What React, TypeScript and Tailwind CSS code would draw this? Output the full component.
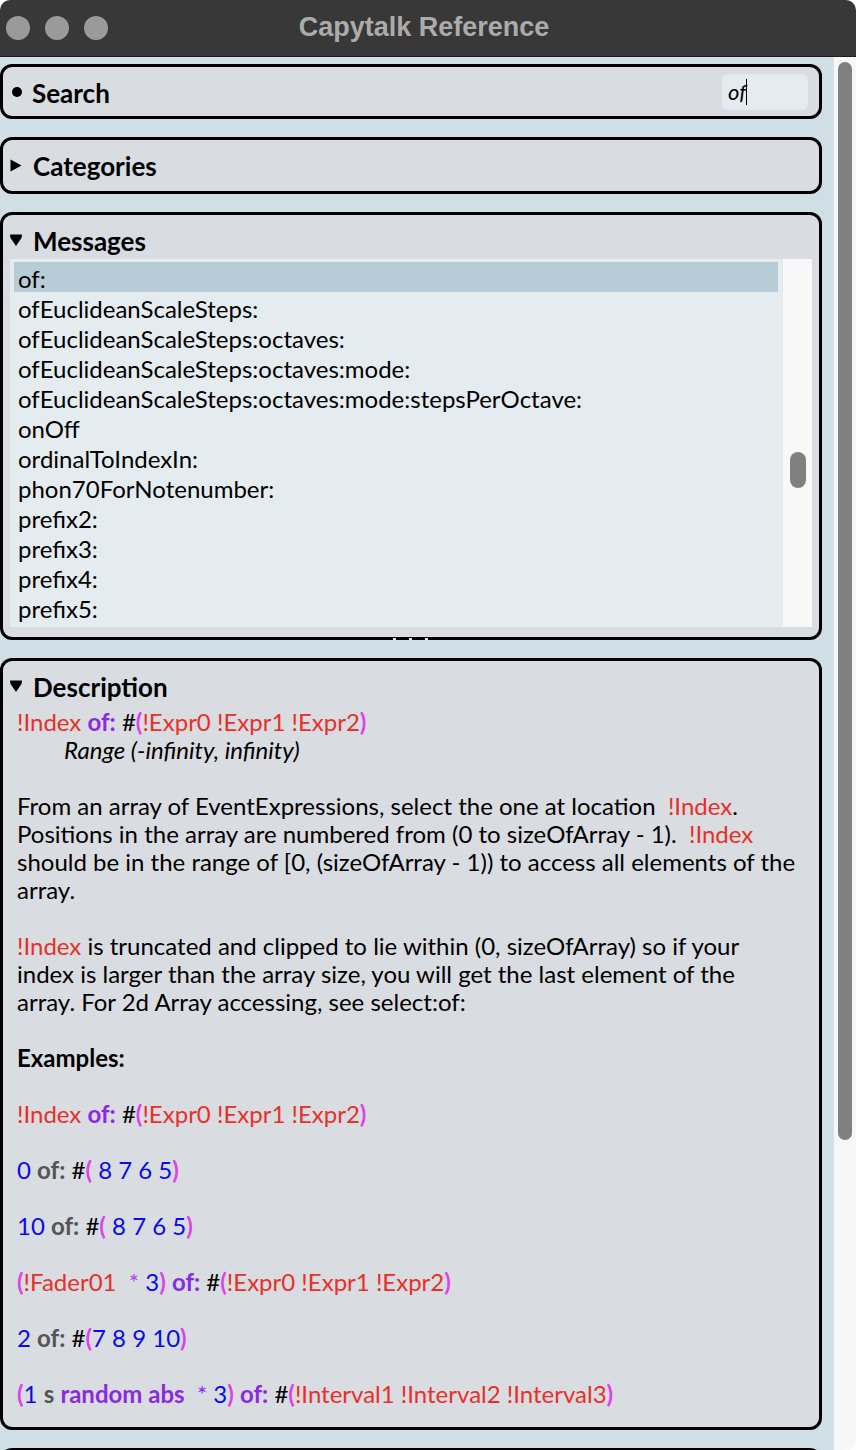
import React from "react";

const R = ({ children }: { children: React.ReactNode }) => <span className="text-[#e8302a]">{children}</span>;
const P = ({ children }: { children: React.ReactNode }) => <span className="text-[#8a2be2] font-bold">{children}</span>;
const G = ({ children }: { children: React.ReactNode }) => <span className="text-[#555555] font-bold">{children}</span>;
const B = ({ children }: { children: React.ReactNode }) => <span className="text-[#0a0aee]">{children}</span>;
const M = ({ children }: { children: React.ReactNode }) => <span className="text-[#dd44e8] font-bold">{children}</span>;
const K = ({ children }: { children: React.ReactNode }) => <span className="text-black">{children}</span>;

const messages = [
  "of:",
  "ofEuclideanScaleSteps:",
  "ofEuclideanScaleSteps:octaves:",
  "ofEuclideanScaleSteps:octaves:mode:",
  "ofEuclideanScaleSteps:octaves:mode:stepsPerOctave:",
  "onOff",
  "ordinalToIndexIn:",
  "phon70ForNotenumber:",
  "prefix2:",
  "prefix3:",
  "prefix4:",
  "prefix5:",
];

function TriRight() {
  return (
    <svg width="12" height="13" viewBox="0 0 12 13" className="shrink-0">
      <polygon points="0.5,0.5 11.5,6.5 0.5,12.5" fill="black" />
    </svg>
  );
}
function TriDown() {
  return (
    <svg width="12" height="12" viewBox="0 0 12 12" className="shrink-0">
      <polygon points="0,0.5 12,0.5 11.5,4 6,12 0.5,4" fill="black" />
    </svg>
  );
}

const Line = ({ children, className = "" }: { children?: React.ReactNode; className?: string }) => (
  <div className={"h-[28px] leading-[30px] whitespace-pre " + className}>{children}</div>
);

const Ex1 = () => (
  <>
    <R>!Index</R> <P>of:</P> <K>#</K><M>(</M><R>!Expr0 !Expr1 !Expr2</R><M>)</M>
  </>
);

export default function App() {
  return (
    <div
      className="w-[856px] h-[1450px] overflow-hidden bg-white"
      style={{ fontFamily: "Lato, 'Noto Sans', sans-serif" }}
    >
      {/* title bar */}
      <div className="h-[57px] bg-[#383838] rounded-t-[10px] border-b border-[#1e1e1e] flex items-center relative">
        <div className="flex gap-[15px] pl-[6px]">
          <div className="w-[24px] h-[24px] rounded-full bg-[#9a9a9a]" />
          <div className="w-[24px] h-[24px] rounded-full bg-[#9a9a9a]" />
          <div className="w-[24px] h-[24px] rounded-full bg-[#9a9a9a]" />
        </div>
        <div
          className="absolute left-0 right-0 top-[10px] text-center text-[27px] font-bold text-[#ababab] leading-[34px] pr-[8px]"
          style={{ fontFamily: "'Liberation Sans', Arial, sans-serif" }}
        >
          Capytalk Reference
        </div>
      </div>

      <div className="flex h-[1393px]">
        {/* main column */}
        <div className="w-[833px] bg-[#d0dfe5] pt-[7px] pr-[11px] flex flex-col gap-[18px] overflow-hidden">
          {/* Search */}
          <div className="shrink-0 h-[55px] border-[3px] border-black rounded-[12px] bg-[#d9dce0] flex items-center pl-[9px] pr-[11px]">
            <div className="w-[10px] h-[10px] rounded-full bg-black shrink-0" />
            <div className="ml-[10px] text-[26px] font-bold text-black leading-[30px] pt-[2px]">Search</div>
            <div className="ml-auto w-[86px] h-[36px] rounded-[6px] bg-[#e4ecef] flex items-center pl-[6px]">
              <span className="italic text-[22px] text-black leading-[24px]">of</span>
              <span className="w-[1px] h-[26px] bg-black" />
            </div>
          </div>

          {/* Categories */}
          <div className="shrink-0 h-[57px] border-[3px] border-black rounded-[12px] bg-[#d9dce0] flex items-center pl-[7px]">
            <TriRight />
            <div className="ml-[11px] text-[26px] font-bold text-black leading-[30px] pt-[1px]">Categories</div>
          </div>

          {/* Messages */}
          <div className="shrink-0 relative border-[3px] border-black rounded-[12px] bg-[#d9dce0] px-[7px] pb-[10px]">
            <div className="h-[44px] pt-[10px] flex items-start">
              <div className="h-[30px] flex items-center">
                <TriDown />
              </div>
              <div className="ml-[11px] text-[26px] font-bold text-black leading-[30px] pt-[1px]">Messages</div>
            </div>
            <div className="h-[368px] bg-[#e4ecef] flex">
              <div className="flex-1 pt-[3px] pl-[4px] pr-[4px]">
                {messages.map((m, i) => (
                  <div
                    key={m}
                    className={
                      "h-[30px] leading-[34px] pl-[4px] text-[24px] text-black " + (i === 0 ? "bg-[#b7ccd7]" : "")
                    }
                  >
                    {m}
                  </div>
                ))}
              </div>
              <div className="w-[30px] bg-[#f8f8f8] border-l border-[#e6e6e6] flex flex-col items-center">
                <div className="mt-[193px] w-[16px] h-[36px] rounded-full bg-[#808080]" />
              </div>
            </div>
            <div className="absolute left-[390px] bottom-[-3px] flex gap-[13px]">
              <div className="w-[3px] h-[2px] bg-[#e8e8e8]" />
              <div className="w-[3px] h-[2px] bg-[#e8e8e8]" />
              <div className="w-[3px] h-[2px] bg-[#e8e8e8]" />
            </div>
          </div>

          {/* Description */}
          <div className="shrink-0 border-[3px] border-black rounded-[12px] bg-[#d9dce0] pl-[7px] pb-[20px] text-[24px] text-black">
            <div className="h-[46px] pt-[10px] flex items-start">
              <div className="h-[30px] flex items-center">
                <TriDown />
              </div>
              <div className="ml-[11px] text-[26px] font-bold text-black leading-[30px] pt-[1px]">Description</div>
            </div>
            <div className="pl-[7px]">
              <Line><Ex1 /></Line>
              <Line className="italic pl-[47px]">Range (-infinity, infinity)</Line>
              <Line />
              <Line>From an array of EventExpressions, select the one at location {"\u00a0"}<R>!Index</R>.</Line>
              <Line>Positions in the array are numbered from (0 to sizeOfArray - 1). {"\u00a0"}<R>!Index</R></Line>
              <Line>should be in the range of [0, (sizeOfArray - 1)) to access all elements of the</Line>
              <Line>array.</Line>
              <Line />
              <Line><R>!Index</R> is truncated and clipped to lie within (0, sizeOfArray) so if your</Line>
              <Line>index is larger than the array size, you will get the last element of the</Line>
              <Line>array. For 2d Array accessing, see select:of:</Line>
              <Line />
              <Line className="font-bold">Examples:</Line>
              <Line />
              <Line><Ex1 /></Line>
              <Line />
              <Line>
                <B>0</B> <G>of:</G> <K>#</K><M>(</M><B> 8 7 6 5</B><M>)</M>
              </Line>
              <Line />
              <Line>
                <B>10</B> <G>of:</G> <K>#</K><M>(</M><B> 8 7 6 5</B><M>)</M>
              </Line>
              <Line />
              <Line>
                <M>(</M><R>!Fader01</R> <span className="text-[#b040e0]"> *</span> <B>3</B><M>)</M> <P>of:</P> <K>#</K><M>(</M><R>!Expr0 !Expr1 !Expr2</R><M>)</M>
              </Line>
              <Line />
              <Line>
                <B>2</B> <G>of:</G> <K>#</K><M>(</M><B>7 8 9 10</B><M>)</M>
              </Line>
              <Line />
              <Line>
                <M>(</M><B>1</B> <G>s</G> <P>random abs</P> <span className="text-[#8a2be2]"> *</span> <B>3</B><M>)</M> <P>of:</P> <K>#</K><M>(</M><R>!Interval1 !Interval2 !Interval3</R><M>)</M>
              </Line>
            </div>
          </div>

          {/* next panel (cut off) */}
          <div className="h-[40px] shrink-0 border-[3px] border-black rounded-[12px] bg-[#d9dce0]" />
        </div>

        {/* outer scrollbar */}
        <div className="w-[23px] bg-[#f7f7f7] border-l border-[#e2e2e2] pt-[5px] pl-[4px] rounded-br-[10px]">
          <div className="w-[14px] h-[1078px] rounded-full bg-[#808080]" />
        </div>
      </div>
    </div>
  );
}
